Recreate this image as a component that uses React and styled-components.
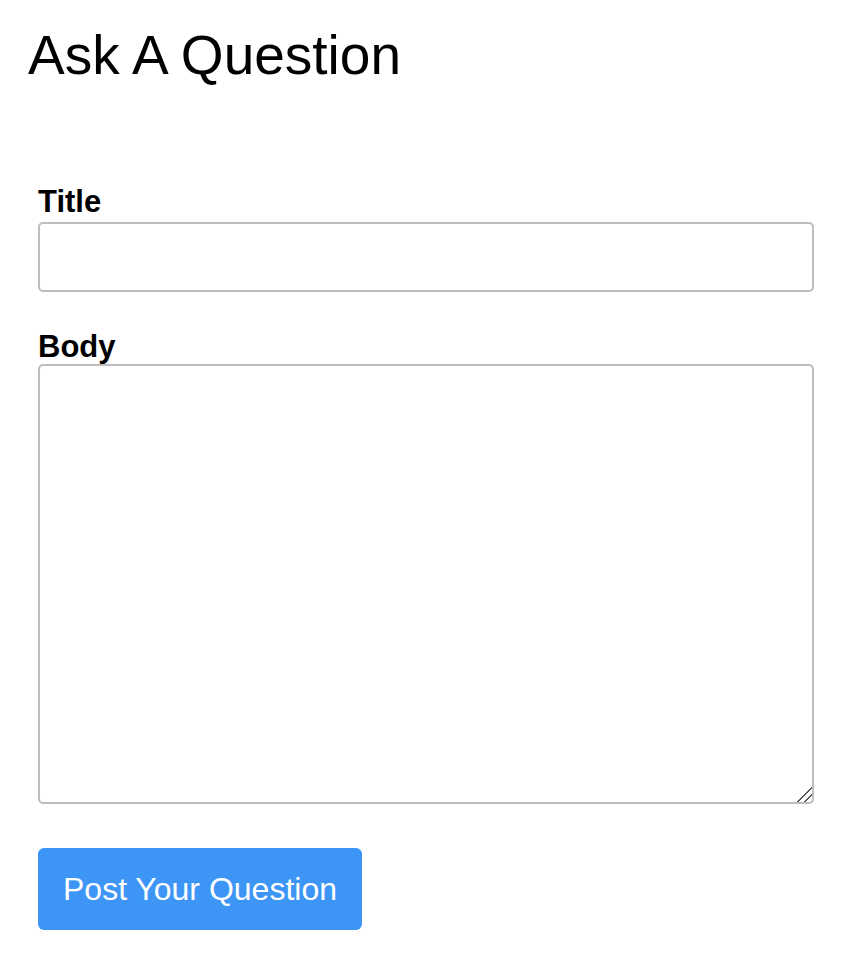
import React from "react"
import styled, { createGlobalStyle } from "styled-components"

const GlobalStyle = createGlobalStyle`
  body {
    margin: 0;
    background: #fff;
    font-family: "Liberation Sans", Arial, sans-serif;
  }
`

const Page = styled.main`
  padding: 0 28px;
`

const Heading = styled.h1`
  margin: 24px 0 0;
  font-size: 55px;
  line-height: 62px;
  font-weight: 400;
  color: #000;
`

const Form = styled.form`
  display: flex;
  flex-direction: column;
  align-items: flex-start;
  padding: 0 10px;
  margin-top: 98px;
`

const Label = styled.label`
  display: block;
  font-size: 31px;
  line-height: 36px;
  font-weight: 700;
  color: #000;
  margin-top: ${(p) => p.$top || "0"};
  margin-bottom: ${(p) => p.$bottom || "2px"};
`

const Field = styled.input`
  box-sizing: border-box;
  width: 776px;
  height: 70px;
  border: 2px solid #bdbdbd;
  border-radius: 5px;
  padding: 8px 12px;
  font-size: 24px;
  font-family: inherit;
  outline: none;
`

const Area = styled.textarea`
  box-sizing: border-box;
  width: 776px;
  height: 440px;
  border: 2px solid #bdbdbd;
  border-radius: 5px;
  padding: 8px 12px;
  font-size: 24px;
  font-family: inherit;
  outline: none;
  display: block;

  &::-webkit-resizer {
    background: linear-gradient(
      135deg,
      transparent 48%,
      #555 48%,
      #555 55%,
      transparent 55%,
      transparent 72%,
      #555 72%,
      #555 79%,
      transparent 79%
    );
  }
`

const Submit = styled.button`
  margin-top: 44px;
  height: 82px;
  width: 324px;
  padding: 0;
  border: none;
  border-radius: 6px;
  background: #3d95f6;
  color: #fff;
  font-family: inherit;
  font-size: 32px;
  cursor: pointer;
`

export default function App() {
  return (
    <Page>
      <GlobalStyle />
      <Heading>Ask A Question</Heading>
      <Form onSubmit={(e) => e.preventDefault()}>
        <Label htmlFor="title">Title</Label>
        <Field id="title" type="text" />
        <Label htmlFor="body" $top="37px" $bottom="-1px">
          Body
        </Label>
        <Area id="body" />
        <Submit type="submit">Post Your Question</Submit>
      </Form>
    </Page>
  )
}
